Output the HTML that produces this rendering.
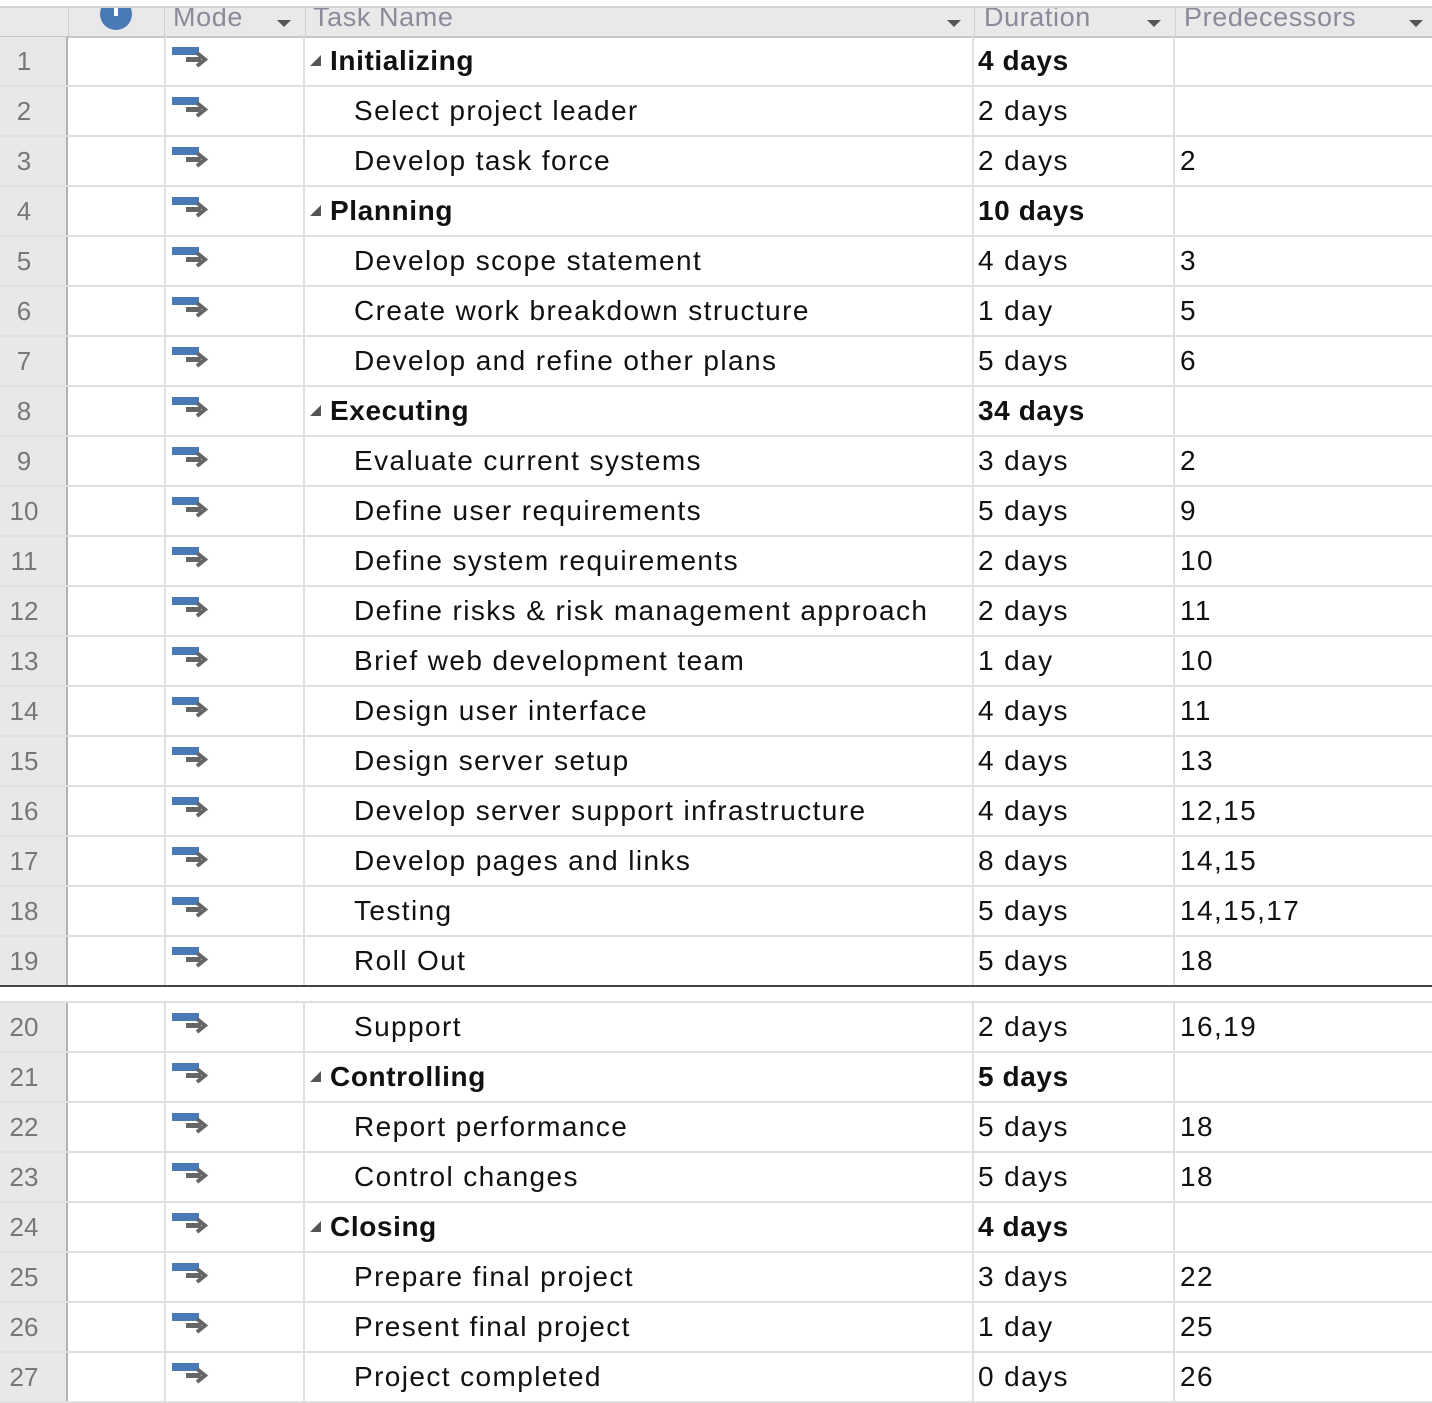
<!DOCTYPE html>
<html><head><meta charset="utf-8"><style>
*{margin:0;padding:0;box-sizing:border-box}
body{width:1432px;height:1401px;background:#fff;position:relative;overflow:hidden;font-family:"Liberation Sans",sans-serif}
.hdr{position:absolute;left:0;top:6px;width:1432px;height:32px;background:#e9e9e9;border-top:2px solid #d4d4d4;border-bottom:2px solid #c8c8c8;overflow:hidden}
.hdr div{position:absolute;top:-7px;font-size:27px;color:#8a8a9a;line-height:32px;letter-spacing:0.6px}
.hdr .v{position:absolute;top:0;width:1px;height:32px;background:#d0d0d0}
.dd{position:absolute;top:12px;width:0;height:0;border-left:7px solid transparent;border-right:7px solid transparent;border-top:7px solid #555}
.info{position:absolute;left:100px;top:-10px;width:32px;height:32px;border-radius:50%;background:#4a7ab5}
.info:after{content:"";position:absolute;left:14px;top:8px;width:4px;height:10px;background:#fff}
.r{position:absolute;left:0;width:1432px;height:50px;border-bottom:2px solid #e0e0e0}
.r>div{position:absolute;top:0;height:48px;line-height:48px;font-size:28px;color:#111;white-space:nowrap;letter-spacing:1.4px}
.n{left:0;width:68px;background:#e8e8e8;border-right:2px solid #b0b0b0;color:#777!important;font-size:26px!important;letter-spacing:0!important}
.n span{display:inline-block;width:48px;text-align:center}
.m{left:164px;width:141px;border-left:2px solid #e0e0e0;border-right:2px solid #e0e0e0}
.m svg{position:absolute;left:4px;top:0}
.t{left:305px;width:669px;padding-left:49px;border-right:2px solid #e0e0e0}
.t.s{padding-left:25px;font-weight:bold;letter-spacing:0.6px}
.t.s:before{content:"";position:absolute;left:5px;top:18px;border-left:11px solid transparent;border-bottom:11px solid #555}
.d{left:974px;width:201px;padding-left:4px;border-right:2px solid #e0e0e0}
.d.b{font-weight:bold;letter-spacing:0.6px}
.p{left:1175px;padding-left:5px}
</style></head><body>
<svg width="0" height="0" style="position:absolute"><defs><g id="ic"><rect x="2" y="10" width="27" height="8" fill="#4a7ab5"/><path d="M16 22.5H31" stroke="#666" stroke-width="5"/><path d="M27 16L35 22.5L27 29" fill="none" stroke="#666" stroke-width="4"/></g></defs></svg>
<div class="hdr">
<span class="v" style="left:68px"></span><span class="v" style="left:164px"></span><span class="v" style="left:305px"></span><span class="v" style="left:974px"></span><span class="v" style="left:1175px"></span>
<span class="info"></span>
<div style="left:173px">Mode</div><span class="dd" style="left:277px"></span>
<div style="left:313px">Task Name</div><span class="dd" style="left:947px"></span>
<div style="left:984px">Duration</div><span class="dd" style="left:1147px"></span>
<div style="left:1184px">Predecessors</div><span class="dd" style="left:1409px"></span>
</div>

<div class="r" style="top:37px"><div class="n"><span>1</span></div><div class="m"><svg width="40" height="40"><use href="#ic"/></svg></div><div class="t s">Initializing</div><div class="d b">4 days</div><div class="p"></div></div>
<div class="r" style="top:87px"><div class="n"><span>2</span></div><div class="m"><svg width="40" height="40"><use href="#ic"/></svg></div><div class="t">Select project leader</div><div class="d">2 days</div><div class="p"></div></div>
<div class="r" style="top:137px"><div class="n"><span>3</span></div><div class="m"><svg width="40" height="40"><use href="#ic"/></svg></div><div class="t">Develop task force</div><div class="d">2 days</div><div class="p">2</div></div>
<div class="r" style="top:187px"><div class="n"><span>4</span></div><div class="m"><svg width="40" height="40"><use href="#ic"/></svg></div><div class="t s">Planning</div><div class="d b">10 days</div><div class="p"></div></div>
<div class="r" style="top:237px"><div class="n"><span>5</span></div><div class="m"><svg width="40" height="40"><use href="#ic"/></svg></div><div class="t">Develop scope statement</div><div class="d">4 days</div><div class="p">3</div></div>
<div class="r" style="top:287px"><div class="n"><span>6</span></div><div class="m"><svg width="40" height="40"><use href="#ic"/></svg></div><div class="t">Create work breakdown structure</div><div class="d">1 day</div><div class="p">5</div></div>
<div class="r" style="top:337px"><div class="n"><span>7</span></div><div class="m"><svg width="40" height="40"><use href="#ic"/></svg></div><div class="t">Develop and refine other plans</div><div class="d">5 days</div><div class="p">6</div></div>
<div class="r" style="top:387px"><div class="n"><span>8</span></div><div class="m"><svg width="40" height="40"><use href="#ic"/></svg></div><div class="t s">Executing</div><div class="d b">34 days</div><div class="p"></div></div>
<div class="r" style="top:437px"><div class="n"><span>9</span></div><div class="m"><svg width="40" height="40"><use href="#ic"/></svg></div><div class="t">Evaluate current systems</div><div class="d">3 days</div><div class="p">2</div></div>
<div class="r" style="top:487px"><div class="n"><span>10</span></div><div class="m"><svg width="40" height="40"><use href="#ic"/></svg></div><div class="t">Define user requirements</div><div class="d">5 days</div><div class="p">9</div></div>
<div class="r" style="top:537px"><div class="n"><span>11</span></div><div class="m"><svg width="40" height="40"><use href="#ic"/></svg></div><div class="t">Define system requirements</div><div class="d">2 days</div><div class="p">10</div></div>
<div class="r" style="top:587px"><div class="n"><span>12</span></div><div class="m"><svg width="40" height="40"><use href="#ic"/></svg></div><div class="t">Define risks &amp; risk management approach</div><div class="d">2 days</div><div class="p">11</div></div>
<div class="r" style="top:637px"><div class="n"><span>13</span></div><div class="m"><svg width="40" height="40"><use href="#ic"/></svg></div><div class="t">Brief web development team</div><div class="d">1 day</div><div class="p">10</div></div>
<div class="r" style="top:687px"><div class="n"><span>14</span></div><div class="m"><svg width="40" height="40"><use href="#ic"/></svg></div><div class="t">Design user interface</div><div class="d">4 days</div><div class="p">11</div></div>
<div class="r" style="top:737px"><div class="n"><span>15</span></div><div class="m"><svg width="40" height="40"><use href="#ic"/></svg></div><div class="t">Design server setup</div><div class="d">4 days</div><div class="p">13</div></div>
<div class="r" style="top:787px"><div class="n"><span>16</span></div><div class="m"><svg width="40" height="40"><use href="#ic"/></svg></div><div class="t">Develop server support infrastructure</div><div class="d">4 days</div><div class="p">12,15</div></div>
<div class="r" style="top:837px"><div class="n"><span>17</span></div><div class="m"><svg width="40" height="40"><use href="#ic"/></svg></div><div class="t">Develop pages and links</div><div class="d">8 days</div><div class="p">14,15</div></div>
<div class="r" style="top:887px"><div class="n"><span>18</span></div><div class="m"><svg width="40" height="40"><use href="#ic"/></svg></div><div class="t">Testing</div><div class="d">5 days</div><div class="p">14,15,17</div></div>
<div class="r" style="top:937px;border-bottom:2px solid #444"><div class="n"><span>19</span></div><div class="m"><svg width="40" height="40"><use href="#ic"/></svg></div><div class="t">Roll Out</div><div class="d">5 days</div><div class="p">18</div></div>
<div style="position:absolute;left:0;top:1001px;width:1432px;height:2px;background:#e0e0e0"></div>
<div class="r" style="top:1003px"><div class="n"><span>20</span></div><div class="m"><svg width="40" height="40"><use href="#ic"/></svg></div><div class="t">Support</div><div class="d">2 days</div><div class="p">16,19</div></div>
<div class="r" style="top:1053px"><div class="n"><span>21</span></div><div class="m"><svg width="40" height="40"><use href="#ic"/></svg></div><div class="t s">Controlling</div><div class="d b">5 days</div><div class="p"></div></div>
<div class="r" style="top:1103px"><div class="n"><span>22</span></div><div class="m"><svg width="40" height="40"><use href="#ic"/></svg></div><div class="t">Report performance</div><div class="d">5 days</div><div class="p">18</div></div>
<div class="r" style="top:1153px"><div class="n"><span>23</span></div><div class="m"><svg width="40" height="40"><use href="#ic"/></svg></div><div class="t">Control changes</div><div class="d">5 days</div><div class="p">18</div></div>
<div class="r" style="top:1203px"><div class="n"><span>24</span></div><div class="m"><svg width="40" height="40"><use href="#ic"/></svg></div><div class="t s">Closing</div><div class="d b">4 days</div><div class="p"></div></div>
<div class="r" style="top:1253px"><div class="n"><span>25</span></div><div class="m"><svg width="40" height="40"><use href="#ic"/></svg></div><div class="t">Prepare final project</div><div class="d">3 days</div><div class="p">22</div></div>
<div class="r" style="top:1303px"><div class="n"><span>26</span></div><div class="m"><svg width="40" height="40"><use href="#ic"/></svg></div><div class="t">Present final project</div><div class="d">1 day</div><div class="p">25</div></div>
<div class="r" style="top:1353px"><div class="n"><span>27</span></div><div class="m"><svg width="40" height="40"><use href="#ic"/></svg></div><div class="t">Project completed</div><div class="d">0 days</div><div class="p">26</div></div>
</body></html>
